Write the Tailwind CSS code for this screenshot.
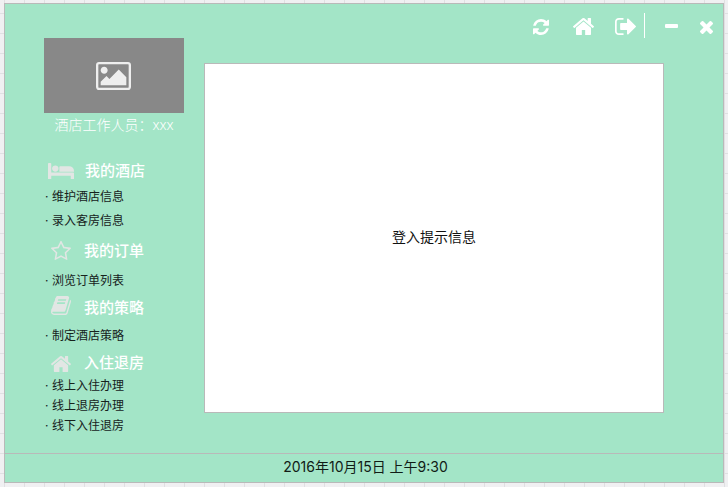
<!DOCTYPE html>
<html lang="zh-CN">
<head>
<meta charset="utf-8">
<title>酒店管理</title>
<script src="https://cdn.jsdelivr.net/npm/@tailwindcss/browser@4"></script>
</head>
<body class="w-[728px] h-[487px] overflow-hidden pl-1 pt-[3px] bg-[#f0f0f2] bg-[linear-gradient(to_right,#e0e0e2_1px,transparent_1px),linear-gradient(to_bottom,#e0e0e2_1px,transparent_1px)] bg-[size:20px_20px] bg-[position:4px_13px] font-['Inter','Noto_Sans_CJK_SC',sans-serif]">
<svg class="hidden">
  <symbol id="home" viewBox="89 253 1614 1283" preserveAspectRatio="none"><path d="M1472 992v480q0 26-19 45t-45 19h-384v-384h-256v384h-384q-26 0-45-19t-19-45v-480q0-1 .5-3t.5-3l575-474 575 474q1 2 1 6zm223-69l-62 74q-8 9-21 11h-3q-13 0-21-7l-692-577-692 577q-12 8-24 7-13-2-21-11l-62-74q-8-10-7-23.500t11-21.500l719-599q32-26 76-26t76 26l244 204v-195q0-14 9-23t23-9h192q14 0 23 9t9 23v408l219 182q10 8 11 21.500t-7 23.500z"/></symbol>
</svg>
<div class="w-[720px] h-[480px] border border-[#b9b9b9] bg-[#a3e5c7] flex flex-col">
  <div class="flex h-[449px]">
    <aside class="w-[199px] pl-[39px] pt-[34px] flex flex-col">
      <div class="w-[140px] h-[75px] bg-[#888] pr-px flex items-center justify-center text-[#eee]">
        <svg class="w-[35px] h-[28px]" viewBox="64 128 1920 1536" preserveAspectRatio="none" fill="currentColor"><path d="M704 576q0 80-56 136t-136 56-136-56-56-136 56-136 136-56 136 56 56 136zm1024 384v448h-1408v-192l320-320 160 160 512-512zm96-704h-1600q-13 0-22.5 9.5t-9.5 22.5v1216q0 13 9.5 22.5t22.5 9.5h1600q13 0 22.5-9.5t9.5-22.500v-1216q0-13-9.500-22.500t-22.500-9.500zm160 32v1216q0 66-47 113t-113 47h-1600q-66 0-113-47t-47-113v-1216q0-66 47-113t113-47h1600q66 0 113 47t47 113z"/></svg>
      </div>
      <div class="h-[24px] w-[140px] text-center text-[14px] leading-[24px] font-light text-white whitespace-nowrap font-['Noto_Sans','Noto_Sans_CJK_SC',sans-serif]">酒店工作人员：xxx</div>
      <nav class="pt-[22px] text-[12px] text-[#16221c] whitespace-nowrap">
        <section>
          <h2 class="h-[25px] pl-1 flex items-center text-[15px] font-medium text-white"><svg class="w-[26px] h-4 mr-[11px] -mt-0.5 fill-[#e2e6e4]" viewBox="0 256 2048 1280" preserveAspectRatio="none"><path d="M256 1024h1728q26 0 45 19t19 45v448h-256v-256h-1536v256h-256v-1216q0-26 19-45t45-19h128q26 0 45 19t19 45v704zM832 704q0 106-75 181t-181 75-181-75-75-181 75-181 181-75 181 75 75 181zM2048 960v-64q0-159-112.500-271.500t-271.500-112.500h-704q-26 0-45 19t-19 45v384h1152z"/></svg>我的酒店</h2>
          <ul>
            <li class="h-[25px] flex items-center"><span class="w-2 pl-px">·</span>维护酒店信息</li>
            <li class="h-[24px] flex items-center"><span class="w-2 pl-px">·</span>录入客房信息</li>
          </ul>
        </section>
        <section class="pt-1">
          <h2 class="h-[28px] pl-[7px] flex items-center text-[15px] font-medium text-white"><svg class="w-[20px] h-[19px] mr-[13px] -mt-0.5 fill-[#e2e6e4]" viewBox="64 60 1664 1559" preserveAspectRatio="none"><path d="M1201 1004l306-297-422-62-189-382-189 382-422 62 306 297-73 421 378-199 377 199zm527-357q0 22-26 48l-363 354 86 500q1 7 1 20 0 50-41 50-19 0-40-12l-449-236-449 236q-22 12-40 12-21 0-31.500-14.500t-10.500-35.500q0-6 2-20l86-500-364-354q-25-27-25-48 0-37 56-46l502-73 225-455q19-41 49-41t49 41l225 455 502 73q56 9 56 46z"/></svg>我的订单</h2>
          <ul class="pt-1">
            <li class="h-[24px] flex items-center"><span class="w-2 pl-px">·</span>浏览订单列表</li>
          </ul>
        </section>
        <section>
          <h2 class="h-[30px] pl-[7px] flex items-center text-[15px] font-medium text-white"><svg class="w-[20px] h-[19px] mr-[13px] -mt-[5px] fill-[#e2e6e4]" viewBox="64 128 1664 1536" preserveAspectRatio="none"><path d="M1703 478q40 57 18 129l-275 906q-19 64-76.5 107.500t-122.500 43.500h-923q-77 0-148.500-53.500t-99.500-131.500q-24-67-2-127 0-4 3-27t4-37q1-8-3-21.500t-3-19.500q2-11 8-21t16.500-23.500 16.500-23.500q23-38 45-91.500t30-91.500q3-10 .5-30t-.5-28q3-11 17-28t17-23q21-36 42-92t25-90q1-9-2.500-32t.5-28q4-13 22-30.500t22-22.500q19-26 42.500-84.500t27.500-96.500q1-8-3-25.500t-2-26.500q2-8 9-18t18-23 17-21q8-12 16.500-30.500t15-35 16-36 19.500-32 26.500-23.500 36-11.500 47.500 5.500l-1 3q38-9 51-9h761q74 0 114 56t18 130l-274 906q-36 119-71.500 153.500t-128.500 34.500h-869q-27 0-38 15-11 16-1 43 24 70 144 70h923q29 0 56-15.500t35-41.500l300-987q7-22 5-57 38 15 59 43zm-1064 2q-4 13 2 22.500t20 9.500h608q13 0 25.500-9.500t16.500-22.500l21-64q4-13-2-22.500t-20-9.500h-608q-13 0-25.500 9.500t-16.500 22.500zm-83 256q-4 13 2 22.500t20 9.500h608q13 0 25.500-9.500t16.500-22.500l21-64q4-13-2-22.500t-20-9.500h-608q-13 0-25.500 9.500t-16.500 22.500z"/></svg>我的策略</h2>
          <ul>
            <li class="h-[26px] flex items-center"><span class="w-2 pl-px">·</span>制定酒店策略</li>
          </ul>
        </section>
        <section>
          <h2 class="h-[28px] pl-[7px] flex items-center text-[15px] font-medium text-white"><svg class="w-[20px] h-4 mr-[13px] mt-px fill-[#e2e6e4]"><use href="#home"/></svg>入住退房</h2>
          <ul class="-mt-px">
            <li class="h-5 flex items-center"><span class="w-2 pl-px">·</span>线上入住办理</li>
            <li class="h-5 flex items-center"><span class="w-2 pl-px">·</span>线上退房办理</li>
            <li class="h-5 flex items-center"><span class="w-2 pl-px">·</span>线下入住退房</li>
          </ul>
        </section>
      </nav>
    </aside>
    <div class="flex-1 flex flex-col">
      <header class="h-[59px] pt-[9px] pr-[10px] flex justify-end items-start">
        <div class="h-[25px] flex items-center fill-white pt-[2px]">
          <svg class="w-4 h-4" viewBox="128 128 1536 1536" preserveAspectRatio="none"><path d="M1639 1056q0 5-1 7-64 268-268 434.500t-478 166.500q-146 0-282.500-55t-243.500-157l-129 129q-19 19-45 19t-45-19-19-45v-448q0-26 19-45t45-19h448q26 0 45 19t19 45-19 45l-137 137q71 66 161 102t187 36q134 0 250-65t186-179q11-17 53-117 8-23 30-23h192q13 0 22.500 9.500t9.500 22.500zm25-800v448q0 26-19 45t-45 19h-448q-26 0-45-19t-19-45 19-45l138-138q-148-137-349-137-134 0-250 65t-186 179q-11 17-53 117-8 23-30 23h-199q-13 0-22.500-9.500t-9.500-22.500v-7q65-268 270-434.500t480-166.500q146 0 284 55.500t245 156.500l130-129q19-19 45-19t45 19 19 45z"/></svg>
          <svg class="w-[21px] h-[17px] ml-6"><use href="#home"/></svg>
          <svg class="w-[21px] h-[17px] ml-[21px]" viewBox="64 256 1568 1280" preserveAspectRatio="none"><path d="M704 1440q0 4 1 20t.5 26.500-3 23.500-10 19.500-20.500 6.500h-320q-119 0-203.500-84.500t-84.500-203.500v-704q0-119 84.500-203.500t203.500-84.500h320q13 0 22.500 9.500t9.500 22.500q0 4 1 20t.5 26.500-3 23.500-10 19.500-20.500 6.500h-320q-66 0-113 47t-47 113v704q0 66 47 113t113 47h312l11.500 1 11.500 3 8 5.500 7 9 2 13.500zm928-544q0 26-19 45l-544 544q-19 19-45 19t-45-19-19-45v-288h-448q-26 0-45-19t-19-45v-384q0-26 19-45t45-19h448v-288q0-26 19-45t45-19 45 19l544 544q19 19 19 45z"/></svg>
        </div>
        <div class="w-px h-[25px] bg-white ml-2"></div>
        <div class="w-[13px] h-[4px] rounded-[1px] bg-white ml-5 mt-[11px]"></div>
        <svg class="w-[13px] h-[13px] ml-[22px] mt-2 fill-white" viewBox="302 366 1188 1188" preserveAspectRatio="none"><path d="M1490 1322q0 40-28 68l-136 136q-28 28-68 28t-68-28l-294-294-294 294q-28 28-68 28t-68-28l-136-136q-28-28-28-68t28-68l294-294-294-294q-28-28-28-68t28-68l136-136q28-28 68-28t68 28l294 294 294-294q28-28 68-28t68 28l136 136q28 28 28 68t-28 68l-294 294 294 294q28 28 28 68z"/></svg>
      </header>
      <main class="w-[460px] h-[350px] bg-white border border-[#b9b9b9] pb-1 flex items-center justify-center text-[14px] text-[#111]">登入提示信息</main>
    </div>
  </div>
  <footer class="flex-1 border-t border-[#b9b9b9] pl-[3px] pb-[3px] flex items-center justify-center text-[14px] text-[#111c16] whitespace-nowrap">2016年10月15日 上午9:30</footer>
</div>
</body>
</html>
